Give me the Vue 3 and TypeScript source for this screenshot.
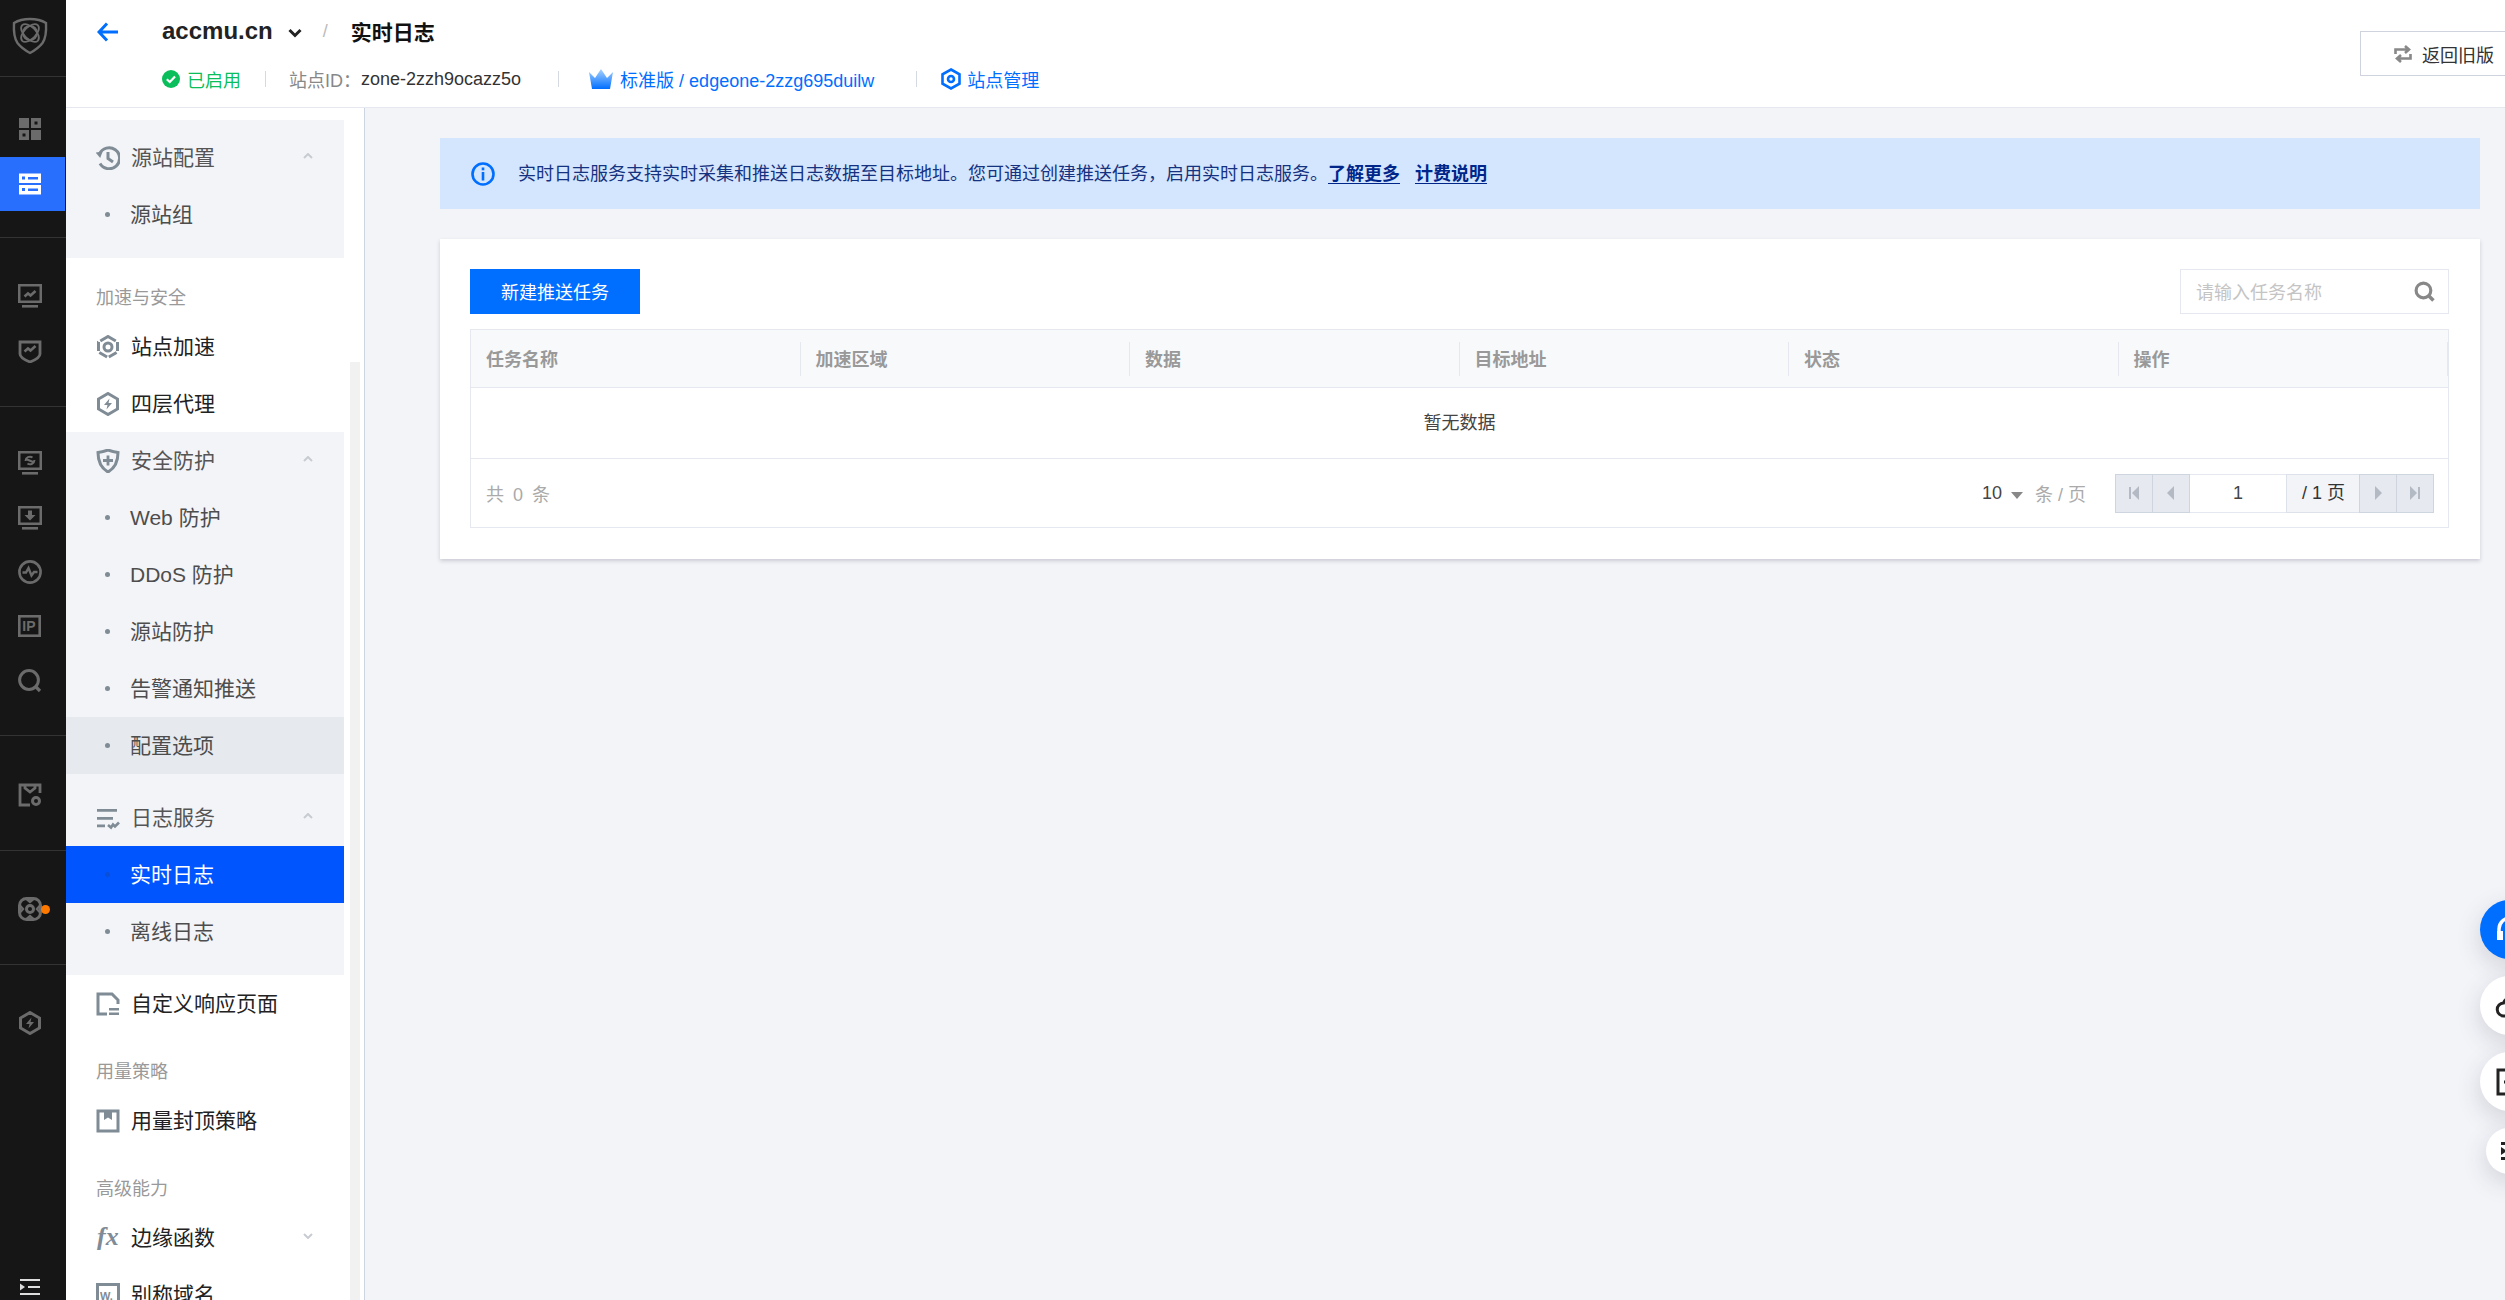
<template>
  <div class="app">
    <aside class="rail">
      <div class="rail-sec logo-sec">
        <svg class="rail-logo" viewBox="0 0 36 38" v-html="icons.logo"></svg>
      </div>
      <div v-for="(sec, i) in railSections" :key="i" class="rail-sec" :style="{ height: sec.h + 'px', paddingTop: sec.pad + 'px' }">
        <div v-for="item in sec.items" :key="item" class="rail-item" :class="{ active: item === 'list' }">
          <svg class="rail-icon" viewBox="0 0 24 24" v-html="icons[item]"></svg>
          <span v-if="item === 'atom'" class="rail-dot"></span>
        </div>
      </div>
      <svg class="rail-collapse" viewBox="0 0 20 16" v-html="icons.collapse"></svg>
    </aside>

    <div class="right">
      <header class="head">
        <div class="head-left">
          <div class="head-top">
            <svg class="back" viewBox="0 0 21 20"><path d="M10 1.5 2 10l8 8.5M2.5 10H21" fill="none" stroke="#006eff" stroke-width="3" /></svg>
            <span class="site">accmu.cn</span>
            <svg class="caret" viewBox="0 0 14 10"><path d="M1.5 2 7 7.5 12.5 2" fill="none" stroke="#222" stroke-width="3" /></svg>
            <span class="slash">/</span>
            <span class="title">实时日志</span>
          </div>
          <div class="head-sub">
            <svg class="ok" viewBox="0 0 18 18"><circle cx="9" cy="9" r="9" fill="#0abf5b" /><path d="M4.8 9.2 7.8 12l5.2-5.4" fill="none" stroke="#fff" stroke-width="2.2" /></svg>
            <span class="ok-text">已启用</span>
            <i class="sep sep-a"></i>
            <span class="id-label">站点ID：</span>
            <span class="id-value">zone-2zzh9ocazz5o</span>
            <i class="sep sep-b"></i>
            <svg class="crown" viewBox="0 0 24 20">
              <defs>
                <linearGradient id="crownFill" x1="0" y1="0" x2="0" y2="1">
                  <stop offset="0" stop-color="#a8d2ff" />
                  <stop offset="1" stop-color="#006eff" />
                </linearGradient>
              </defs>
              <path d="M0 3l6 6 6-9 6 9 6-6-3 17H3z" fill="url(#crownFill)" />
            </svg>
            <a class="link plan">标准版 / edgeone-2zzg695duilw</a>
            <i class="sep sep-c"></i>
            <svg class="hex" viewBox="0 0 20 22"><path d="M10 1.5 18.5 6.300v9.400L10 20.500 1.500 15.700V6.300z" fill="none" stroke="#006eff" stroke-width="2.600" /><circle cx="10" cy="11" r="3" fill="none" stroke="#006eff" stroke-width="2.600" /></svg>
            <a class="link manage">站点管理</a>
          </div>
        </div>
        <button class="old-btn">
          <svg class="old-icon" viewBox="0 0 18 18"><path d="M1.500 9V4.500H14M11 1l4 3.500-4 3.500M16.500 9v4.500H4M7 10l-4 3.500L7 17" fill="none" stroke="#888" stroke-width="2.600" /></svg>
          返回旧版
        </button>
      </header>

      <div class="body">
        <nav class="side">
          <div class="menu">
            <template v-for="(block, i) in menu" :key="i">
              <div v-if="block.label" class="menu-label">{{ block.label }}</div>
              <div v-else-if="block.group" class="menu-group" :class="block.cls">
                <div v-for="row in block.group" :key="row.text" class="menu-row" :class="[row.icon ? 'top in-group' : 'sub', row.state]">
                  <svg v-if="row.icon" class="menu-icon" viewBox="0 0 24 24" v-html="icons[row.icon]"></svg>
                  <span v-else class="menu-dot"></span>
                  <span class="menu-text">{{ row.text }}</span>
                  <svg v-if="row.icon" class="menu-caret" viewBox="0 0 10 6"><path d="M1 5l4-4 4 4" fill="none" stroke="#c8ccd2" stroke-width="2" /></svg>
                </div>
              </div>
              <div v-else class="menu-row top">
                <svg class="menu-icon" viewBox="0 0 24 24" v-html="icons[block.icon!]"></svg>
                <span class="menu-text">{{ block.text }}</span>
                <svg v-if="block.down" class="menu-caret" viewBox="0 0 10 6"><path d="M1 1l4 4 4-4" fill="none" stroke="#c8ccd2" stroke-width="2" /></svg>
              </div>
            </template>
          </div>
          <div class="scroll-track"></div>
        </nav>

        <main class="main">
          <div class="alert">
            <svg class="alert-icon" viewBox="0 0 24 24"><circle cx="12" cy="12" r="10.500" fill="none" stroke="#006eff" stroke-width="2.600" /><rect x="10.700" y="5.500" width="2.600" height="2.800" fill="#006eff" /><rect x="10.700" y="10" width="2.600" height="8.500" fill="#006eff" /></svg>
            <span class="alert-text">实时日志服务支持实时采集和推送日志数据至目标地址。您可通过创建推送任务，启用实时日志服务。</span>
            <a class="alert-link">了解更多</a>
            <a class="alert-link second">计费说明</a>
          </div>

          <section class="card">
            <div class="toolbar">
              <button class="primary">新建推送任务</button>
              <div class="search">
                <span class="placeholder">请输入任务名称</span>
                <svg class="search-icon" viewBox="0 0 20 20"><circle cx="9" cy="9" r="7" fill="none" stroke="#888" stroke-width="3" /><path d="M13.500 13.500 18.500 18.500" stroke="#888" stroke-width="3.400" /></svg>
              </div>
            </div>
            <div class="table">
              <div class="thead">
                <div v-for="col in columns" :key="col" class="th"><span class="th-in">{{ col }}</span></div>
              </div>
              <div class="empty">暂无数据</div>
              <div class="tfoot">
                <span class="total">共 0 条</span>
                <div class="pager-wrap">
                  <span class="size">10</span>
                  <i class="size-tri"></i>
                  <span class="per">条 / 页</span>
                  <div class="pager">
                    <span class="pg-btn"><svg viewBox="0 0 12 14"><rect x="1" y="1" width="2" height="12" fill="#b4bac4" /><path d="M11 0v14L4 7z" fill="#b4bac4" /></svg></span>
                    <span class="pg-btn"><svg viewBox="0 0 12 14"><path d="M9 0v14L2 7z" fill="#b4bac4" /></svg></span>
                    <span class="pg-input">1</span>
                    <span class="pg-total">/ 1 页</span>
                    <span class="pg-btn"><svg viewBox="0 0 12 14"><path d="M3 0v14l7-7z" fill="#b4bac4" /></svg></span>
                    <span class="pg-btn"><svg viewBox="0 0 12 14"><path d="M1 0v14l7-7z" fill="#b4bac4" /><rect x="9" y="1" width="2" height="12" fill="#b4bac4" /></svg></span>
                  </div>
                </div>
              </div>
            </div>
          </section>
        </main>
      </div>
    </div>

    <div class="floats">
      <div class="float blue">
        <svg viewBox="0 0 30 30"><path d="M4 18v-4a11 11 0 0 1 22 0v4" fill="none" stroke="#fff" stroke-width="3.500" /><rect x="2" y="16" width="6" height="9" fill="#fff" /></svg>
      </div>
      <div class="float">
        <svg viewBox="0 0 30 30"><path d="M9 25a6.500 6.500 0 0 1-.5-13 8 8 0 0 1 15 0 6.500 6.500 0 0 1 0 13z" fill="none" stroke="#222" stroke-width="3" /></svg>
      </div>
      <div class="float">
        <svg viewBox="0 0 30 30"><path d="M3 3h24v24H3z" fill="none" stroke="#222" stroke-width="3" /><rect x="9" y="13.500" width="12" height="3" fill="#222" /></svg>
      </div>
      <div class="float small">
        <svg viewBox="0 0 24 24"><path d="M4 3h20v3H4zM10 10h14v3H10zM4 18h20v3H4z" fill="#222" /><path d="M4 8l6 4-6 4z" fill="#222" /></svg>
      </div>
    </div>
  </div>
</template>

<script setup lang="ts">
interface MenuRow {
  text: string;
  icon?: string;
  state?: string;
}

interface MenuBlock {
  label?: string;
  text?: string;
  icon?: string;
  down?: boolean;
  cls?: string;
  group?: MenuRow[];
}

const zigzag = '<path d="M6.500 12.500l3.500-3 2.500 2 5-4.500" fill="none" stroke="currentColor" stroke-width="2.600"/>';

const icons: Record<string, string> = {
  logo:
    '<path d="M18 2C12 2 6 3.500 2 6c-.5 9 0 15 3.500 20 3 4 8 7.500 12.500 10 4.500-2.500 9.500-6 12.500-10C34 21 34.500 15 34 6c-4-2.500-10-4-16-4z" fill="none" stroke="currentColor" stroke-width="2.400"/>' +
    '<circle cx="18" cy="16" r="7" fill="none" stroke="currentColor" stroke-width="2"/><ellipse cx="18" cy="16" rx="11" ry="6" transform="rotate(45 18 16)" fill="none" stroke="currentColor" stroke-width="1.800"/><ellipse cx="18" cy="16" rx="11" ry="6" transform="rotate(-45 18 16)" fill="none" stroke="currentColor" stroke-width="1.800"/>',
  grid:
    '<rect x="1" y="1" width="10" height="10" fill="currentColor"/><path fill-rule="evenodd" d="M13 1h10v10H13zM16.500 4.500v3h3v-3z" fill="currentColor"/><path fill-rule="evenodd" d="M1 13h10v10H1zM4.500 16.500v3h3v-3z" fill="currentColor"/><rect x="13" y="13" width="10" height="10" fill="currentColor"/>',
  list:
    '<path fill-rule="evenodd" d="M1 1.500h22v9.500H1zM4 4.500v3h3v-3zM10 5v2.500h10V5zM1 13h22v9.500H1zM4 16v3h3v-3zM10 16.500V19h10v-2.500z" fill="currentColor"/>',
  chart:
    '<path fill-rule="evenodd" d="M0 0h24v19H0zM2.500 2.500v14h19v-14z" fill="currentColor"/><rect x="4" y="21" width="16" height="2.600" fill="currentColor"/>' + zigzag,
  shield:
    '<path d="M2 3h20v12c0 3.500-5 6-10 8C7 21 2 18.500 2 15z" fill="none" stroke="currentColor" stroke-width="2.800"/>' + zigzag,
  sync:
    '<path fill-rule="evenodd" d="M0 0h24v19H0zM2.500 2.500v14h19v-14z" fill="currentColor"/><rect x="4" y="21" width="16" height="2.600" fill="currentColor"/><path d="M7.500 10a4.500 4.500 0 0 1 7-3.500M16.500 9a4.500 4.500 0 0 1-7 3.500M15 11 8 8" fill="none" stroke="currentColor" stroke-width="2"/>',
  down:
    '<path fill-rule="evenodd" d="M0 0h24v19H0zM2.500 2.500v14h19v-14z" fill="currentColor"/><rect x="4" y="21" width="16" height="2.600" fill="currentColor"/><path d="M10 4.500h4V9h3.500L12 14.500 6.500 9H10z" fill="currentColor"/>',
  pulse:
    '<circle cx="12" cy="12" r="10.600" fill="none" stroke="currentColor" stroke-width="2.600"/><path d="M4.500 12.500h3.500l2.500-4.500 3 7.500 2.500-3.500h3.500" fill="none" stroke="currentColor" stroke-width="2.400"/>',
  ip:
    '<rect x="1.300" y="1.300" width="20.400" height="19.400" fill="none" stroke="currentColor" stroke-width="2.600"/><text x="4.300" y="16" font-family="Liberation Sans" font-weight="700" font-size="14" fill="currentColor">IP</text>',
  search:
    '<circle cx="11" cy="11" r="9.400" fill="none" stroke="currentColor" stroke-width="3"/><path d="M17.500 17.500 22 22" stroke="currentColor" stroke-width="3.200"/>',
  doc:
    '<path d="M12 22H2V2h20v8" fill="none" stroke="currentColor" stroke-width="2.800"/><path d="M7 2v3l5 4 5-4V2" fill="none" stroke="currentColor" stroke-width="2.800"/><circle cx="18" cy="18" r="3.500" fill="none" stroke="currentColor" stroke-width="3"/>',
  atom:
    '<rect x="1.500" y="1.500" width="21" height="21" rx="7" fill="none" stroke="currentColor" stroke-width="3"/><circle cx="12" cy="12" r="3.500" fill="none" stroke="currentColor" stroke-width="3"/><path d="M8 1.500 12 5l4-3.500M8 22.500 12 19l4 3.500M1.500 8 5 12l-3.500 4M22.500 8 19 12l3.500 4" fill="none" stroke="currentColor" stroke-width="2.400"/>',
  bolt:
    '<path d="M12 1.500 21.500 7v10L12 22.500 2.500 17V7z" fill="none" stroke="currentColor" stroke-width="3"/><path d="M13.500 6.500 8 13h3.500l-1 4.500L16 11h-3.500z" fill="currentColor"/>',
  collapse:
    '<path d="M0 0h20v2H0zM8 7h12v2H8zM0 14h20v2H0z" fill="currentColor"/><path d="M0 4.500 5 8l-5 3.500z" fill="currentColor"/>',
  history:
    '<path d="M3.500 8A10.500 10.500 0 1 1 4 17.500" fill="none" stroke="currentColor" stroke-width="3"/><path d="M0 10h7L3.500 4z" fill="currentColor" transform="rotate(170 3.500 8)"/><path d="M12 6v6.500l5 3.500" fill="none" stroke="currentColor" stroke-width="3"/>',
  speed:
    '<path d="M12 1.500 21.500 7v10L12 22.500 2.500 17V7z" fill="none" stroke="currentColor" stroke-width="3" stroke-dasharray="9 2"/><circle cx="12" cy="12" r="4" fill="none" stroke="currentColor" stroke-width="3"/>',
  guard:
    '<path d="M2 3.500C5 3 9 2 12 1c3 1 7 2 10 2.500 0 10-3 15.500-10 19.500C5 19 2 13.500 2 3.500z" fill="none" stroke="currentColor" stroke-width="3"/><path d="M12 6.500v10M7 11.500h10" fill="none" stroke="currentColor" stroke-width="2.800"/>',
  logs:
    '<path d="M1 3h20v2.800H1zM1 11h16v2.800H1zM1 18.500h8v2.800H1z" fill="currentColor"/><path d="M12 19l3 2.500 2-3 2 2 4-4" fill="none" stroke="currentColor" stroke-width="2.600"/>',
  page:
    '<path d="M11 22H2V2h14l6 6v4" fill="none" stroke="currentColor" stroke-width="3"/><path d="M13 16h10v2.400H13zM13 20.500h10v2.400H13z" fill="currentColor"/>',
  cap:
    '<rect x="2" y="2" width="20" height="20" fill="none" stroke="currentColor" stroke-width="3"/><path d="M8 2h8v9l-4-2.500L8 11z" fill="currentColor"/>',
  fx:
    '<text x="1" y="19" font-family="Liberation Serif" font-style="italic" font-weight="700" font-size="26" fill="currentColor">fx</text>',
  word:
    '<rect x="1.500" y="1.500" width="21" height="21" fill="none" stroke="currentColor" stroke-width="3"/><text x="4" y="17" font-family="Liberation Sans" font-weight="700" font-size="11" fill="currentColor">W.</text>',
};

const railSections = [
  { h: 161, pad: 25, items: ["grid", "list"] },
  { h: 169, pad: 31, items: ["chart", "shield"] },
  { h: 329, pad: 29, items: ["sync", "down", "pulse", "ip", "search"] },
  { h: 115, pad: 32, items: ["doc"] },
  { h: 114, pad: 31, items: ["atom"] },
  { h: 0, pad: 31, items: ["bolt"] },
];

const menu: MenuBlock[] = [
  {
    cls: "first",
    group: [{ text: "源站配置", icon: "history" }, { text: "源站组" }],
  },
  { label: "加速与安全" },
  { text: "站点加速", icon: "speed" },
  { text: "四层代理", icon: "bolt" },
  {
    cls: "second",
    group: [
      { text: "安全防护", icon: "guard" },
      { text: "Web 防护" },
      { text: "DDoS 防护" },
      { text: "源站防护" },
      { text: "告警通知推送" },
      { text: "配置选项", state: "hover" },
      { text: "日志服务", icon: "logs", state: "spaced" },
      { text: "实时日志", state: "current" },
      { text: "离线日志" },
    ],
  },
  { text: "自定义响应页面", icon: "page" },
  { label: "用量策略" },
  { text: "用量封顶策略", icon: "cap" },
  { label: "高级能力" },
  { text: "边缘函数", icon: "fx", down: true },
  { text: "别称域名", icon: "word" },
];

const columns = ["任务名称", "加速区域", "数据", "目标地址", "状态", "操作"];
</script>

<style scoped>
.app {
  position: relative;
  display: flex;
  width: 2505px;
  height: 1300px;
  overflow: hidden;
  font-family: "Liberation Sans", "Noto Sans CJK SC", sans-serif;
  font-size: 18px;
  color: #333;
  background: #f3f4f8;
}

.rail {
  position: relative;
  flex: none;
  display: flex;
  flex-direction: column;
  width: 66px;
  height: 1300px;
  background: #161616;
  color: #6b6b6b;
}

.rail-sec {
  box-sizing: border-box;
  border-bottom: 1px solid #333;
  flex: none;
}

.rail-sec:last-of-type {
  border-bottom: 0;
}

.logo-sec {
  display: flex;
  justify-content: center;
  height: 77px;
  padding: 17px 6px 0 0;
}

.rail-logo {
  width: 36px;
  height: 38px;
}

.rail-item {
  position: relative;
  display: flex;
  align-items: center;
  justify-content: center;
  box-sizing: border-box;
  width: 65px;
  height: 54.5px;
  padding-right: 5px;
}

.rail-item.active {
  background: #276ffc;
  color: #fff;
}

.rail-icon {
  width: 24px;
  height: 24px;
}

.rail-dot {
  position: absolute;
  left: 41px;
  top: 23px;
  width: 9px;
  height: 9px;
  border-radius: 50%;
  background: #ff7800;
}

.rail-collapse {
  position: absolute;
  left: 20px;
  top: 1279px;
  width: 20px;
  height: 16px;
  color: #ddd;
}

.right {
  flex: 1;
  display: flex;
  flex-direction: column;
  min-width: 0;
}

.head {
  flex: none;
  box-sizing: border-box;
  display: flex;
  justify-content: space-between;
  height: 108px;
  background: #fff;
  border-bottom: 1px solid #e5e8ee;
}

.head-left {
  padding-left: 31px;
}

.head-top {
  display: flex;
  align-items: center;
  height: 32px;
  margin-top: 16px;
}

.back {
  width: 21px;
  height: 20px;
  margin-right: 44px;
}

.site {
  margin-top: -3px;
  font-size: 24px;
  font-weight: 700;
  color: #222;
}

.caret {
  width: 14px;
  height: 10px;
  margin: 2px 0 0 15px;
}

.slash {
  margin: -2px 0 0 21px;
  color: #bbb;
  font-size: 18px;
}

.title {
  margin: -3px 0 0 23px;
  font-size: 21px;
  font-weight: 700;
  color: #111;
}

.head-sub {
  display: flex;
  align-items: center;
  height: 26px;
  margin: 18px 0 0 65px;
  white-space: nowrap;
}

.ok {
  width: 18px;
  height: 18px;
  margin-right: 7px;
}

.ok-text {
  color: #0abf5b;
}

.sep {
  width: 1px;
  height: 16px;
  background: #d5dae2;
}

.sep-a {
  margin: 0 23px 0 24px;
}

.sep-b {
  margin: 0 30px 0 37px;
}

.sep-c {
  margin: 0 24px 0 42px;
}

.id-label {
  color: #888;
}

.id-value {
  color: #333;
}

.crown {
  width: 24px;
  height: 20px;
  margin-right: 7px;
}

.hex {
  width: 20px;
  height: 22px;
  margin-right: 6px;
}

.link {
  color: #006eff;
}

.old-btn {
  display: flex;
  align-items: center;
  align-self: flex-start;
  box-sizing: border-box;
  width: 160px;
  height: 45px;
  margin: 31px -15px 0 0;
  padding: 0 0 0 33px;
  background: #fff;
  border: 1px solid #cfd3de;
  font: inherit;
  color: #333;
  flex: none;
}

.old-icon {
  width: 18px;
  height: 18px;
  margin-right: 10px;
}

.body {
  flex: 1;
  display: flex;
  min-height: 0;
}

.side {
  position: relative;
  flex: none;
  box-sizing: border-box;
  width: 299px;
  background: #fff;
  border-right: 1px solid #cdd5e1;
  overflow: hidden;
}

.menu {
  width: 278px;
  padding-top: 12px;
}

.menu-label {
  height: 40px;
  margin-top: 20px;
  padding-left: 30px;
  line-height: 40px;
  color: #999;
}

.menu-row {
  position: relative;
  display: flex;
  align-items: center;
  height: 57px;
  font-size: 21px;
  white-space: nowrap;
}

.menu-text {
  margin-top: -3px;
}

.menu-row.top {
  padding-left: 30px;
  color: #222;
}

.menu-row.in-group {
  color: #555;
}

.menu-row.sub {
  padding-left: 39px;
  color: #4d4d4d;
}

.menu-row.hover {
  background: #e6e9ee;
}

.menu-row.spaced {
  margin-top: 15px;
}

.menu-row.current {
  background: #0055ff;
  color: #fff;
}

.menu-row.current .menu-dot {
  background: #0a4fd8;
}

.menu-group {
  padding-bottom: 15px;
  background: #f3f4f8;
}

.menu-group.first {
  padding-top: 9px;
}

.menu-icon {
  flex: none;
  width: 24px;
  height: 24px;
  margin-right: 11px;
  color: #7f8b95;
}

.menu-dot {
  flex: none;
  width: 5px;
  height: 5px;
  margin-right: 20px;
  border-radius: 50%;
  background: #7f8b95;
}

.menu-caret {
  position: absolute;
  left: 237px;
  top: 24px;
  width: 10px;
  height: 6px;
}

.scroll-track {
  position: absolute;
  left: 284px;
  top: 254px;
  bottom: 0;
  width: 10px;
  background: #f1f1f1;
}

.main {
  flex: 1;
  min-width: 0;
  padding: 30px 25px 0 75px;
}

.alert {
  display: flex;
  align-items: center;
  box-sizing: border-box;
  height: 71px;
  margin-bottom: 30px;
  padding-left: 31px;
  background: #d4e5fe;
  color: #14327f;
  white-space: nowrap;
}

.alert-icon {
  width: 24px;
  height: 24px;
  margin-right: 23px;
}

.alert-text {
  margin-top: -3px;
}

.alert-link {
  margin-top: -3px;
  font-weight: 700;
  color: #00268a;
  text-decoration: underline;
  text-underline-offset: 3px;
}

.alert-link.second {
  margin-left: 15px;
}

.card {
  box-sizing: border-box;
  height: 320px;
  padding: 30px 31px 31px 30px;
  background: #fff;
  box-shadow: 0 2px 4px rgba(54, 58, 80, 0.22);
}

.toolbar {
  display: flex;
  justify-content: space-between;
  height: 45px;
  margin-bottom: 15px;
}

.primary {
  width: 170px;
  height: 45px;
  padding: 0 0 2px;
  border: 0;
  background: #006eff;
  color: #fff;
  font: inherit;
}

.search {
  display: flex;
  align-items: center;
  justify-content: space-between;
  box-sizing: border-box;
  width: 269px;
  height: 45px;
  padding: 0 13px 0 15px;
  border: 1px solid #e5e8ee;
}

.placeholder {
  margin-top: -2px;
  color: #c4c4c4;
}

.search-icon {
  width: 21px;
  height: 21px;
}

.table {
  box-sizing: border-box;
  height: 199px;
  border: 1px solid #e5e8ee;
}

.thead {
  box-sizing: border-box;
  display: grid;
  grid-template-columns: repeat(6, 1fr);
  align-items: center;
  height: 58px;
  background: #f8f9fb;
  border-bottom: 1px solid #e5e8ee;
}

.th-in {
  display: block;
  box-sizing: border-box;
  height: 34px;
  padding-left: 15px;
  line-height: 36px;
  border-right: 1px solid #e5e8ee;
  font-weight: 700;
  color: #999;
}

.empty {
  box-sizing: border-box;
  height: 71px;
  line-height: 71px;
  text-align: center;
  border-bottom: 1px solid #e5e8ee;
  color: #444;
}

.tfoot {
  display: flex;
  align-items: center;
  justify-content: space-between;
  height: 68px;
  padding: 0 14px 0 15px;
}

.total {
  color: #aaa;
  word-spacing: 4px;
}

.pager-wrap {
  display: flex;
  align-items: center;
}

.size {
  color: #444;
}

.size-tri {
  width: 0;
  height: 0;
  margin: 5px 12px 0 9px;
  border-left: 6px solid transparent;
  border-right: 6px solid transparent;
  border-top: 7px solid #888;
}

.per {
  margin-right: 30px;
  color: #aaa;
}

.pager {
  display: flex;
  align-items: stretch;
  height: 39px;
}

.pg-btn {
  display: flex;
  align-items: center;
  justify-content: center;
  box-sizing: border-box;
  width: 38px;
  margin-left: -1px;
  background: #e6e9ef;
  border: 1px solid #cfd5de;
}

.pg-btn svg {
  width: 12px;
  height: 14px;
}

.pg-input {
  box-sizing: border-box;
  width: 96px;
  line-height: 37px;
  text-align: center;
  border-top: 1px solid #e5e8ee;
  border-bottom: 1px solid #e5e8ee;
  background: #fff;
  color: #444;
}

.pg-total {
  box-sizing: border-box;
  width: 74px;
  line-height: 37px;
  text-align: center;
  background: #f2f4f8;
  border: 1px solid #dde1e9;
  border-right: 0;
  color: #333;
}

.floats {
  position: absolute;
  left: 2480px;
  top: 900px;
  display: flex;
  flex-direction: column;
  gap: 17px;
}

.float {
  display: flex;
  align-items: center;
  justify-content: center;
  flex: none;
  width: 59px;
  height: 59px;
  border-radius: 50%;
  background: #fff;
  box-shadow: 0 8px 24px rgba(54, 58, 80, 0.18);
}

.float svg {
  width: 30px;
  height: 30px;
}

.float.blue {
  background: #006eff;
}

.float.small {
  width: 46px;
  height: 46px;
  margin-left: 6px;
}

.float.small svg {
  width: 24px;
  height: 24px;
}
</style>

<style>
html,
body {
  margin: 0;
  overflow: hidden;
}
</style>
